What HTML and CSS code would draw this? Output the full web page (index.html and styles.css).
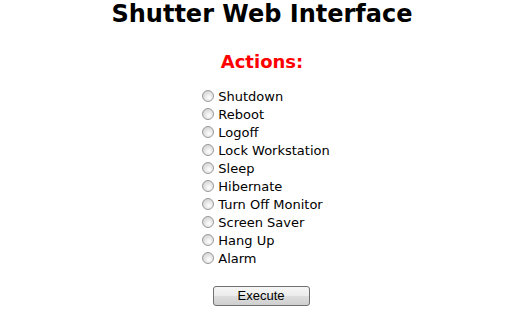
FILE: index.html
```html
<!DOCTYPE html>
<html lang="en">
<head>
  <meta charset="UTF-8">
  <meta name="viewport" content="width=device-width, initial-scale=1.0">
  <title>Shutter Web Interface</title>
  <link rel="stylesheet" href="styles.css">
</head>
<body>
  <h1>Shutter Web Interface</h1>
  <h2>Actions:</h2>
  <form class="actions">
    <div class="list">
      <label class="option"><input type="radio" name="action" value="shutdown">Shutdown</label>
      <label class="option"><input type="radio" name="action" value="reboot">Reboot</label>
      <label class="option"><input type="radio" name="action" value="logoff">Logoff</label>
      <label class="option"><input type="radio" name="action" value="lock">Lock Workstation</label>
      <label class="option"><input type="radio" name="action" value="sleep">Sleep</label>
      <label class="option"><input type="radio" name="action" value="hibernate">Hibernate</label>
      <label class="option"><input type="radio" name="action" value="monitor">Turn Off Monitor</label>
      <label class="option"><input type="radio" name="action" value="screensaver">Screen Saver</label>
      <label class="option"><input type="radio" name="action" value="hangup">Hang Up</label>
      <label class="option"><input type="radio" name="action" value="alarm">Alarm</label>
    </div>
    <div class="submit">
      <button type="button" class="execute">Execute</button>
    </div>
  </form>
</body>
</html>
```

FILE: styles.css
```css
body {
  margin: 0;
  padding: 0 8px;
  background: #ffffff;
  color: #000000;
  font-family: "DejaVu Sans", Verdana, sans-serif;
  text-align: center;
}

h1 {
  margin: 0;
  font-size: 24px;
  line-height: 28px;
  font-weight: bold;
}

h2 {
  margin: 23px 0 0;
  font-size: 18px;
  line-height: 22px;
  font-weight: bold;
  color: #ff0000;
}

.actions {
  margin-top: 14px;
}

.list {
  display: inline-block;
  padding-left: 8px;
  text-align: left;
}

.option {
  display: flex;
  align-items: center;
  height: 18px;
  font-size: 13px;
  gap: 4px;
}

.option input {
  appearance: none;
  -webkit-appearance: none;
  margin: 0;
  width: 12px;
  height: 12px;
  border-radius: 50%;
  border: 1px solid #9a9a9a;
  background: radial-gradient(circle at 60% 65%, #ffffff 0, #e6e6e6 45%, #c4c4c4 100%);
  box-sizing: border-box;
}

.submit {
  margin-top: 17px;
}

.execute {
  width: 97px;
  height: 20px;
  padding: 0;
  margin-left: -2px;
  font-family: "Liberation Sans", Arial, sans-serif;
  font-size: 13px;
  color: #000000;
  border: 1px solid #707070;
  border-radius: 3px;
  background: linear-gradient(to bottom, #f6f6f6 0%, #ebebeb 50%, #dddddd 51%, #cfcfcf 100%);
  cursor: pointer;
}
```
